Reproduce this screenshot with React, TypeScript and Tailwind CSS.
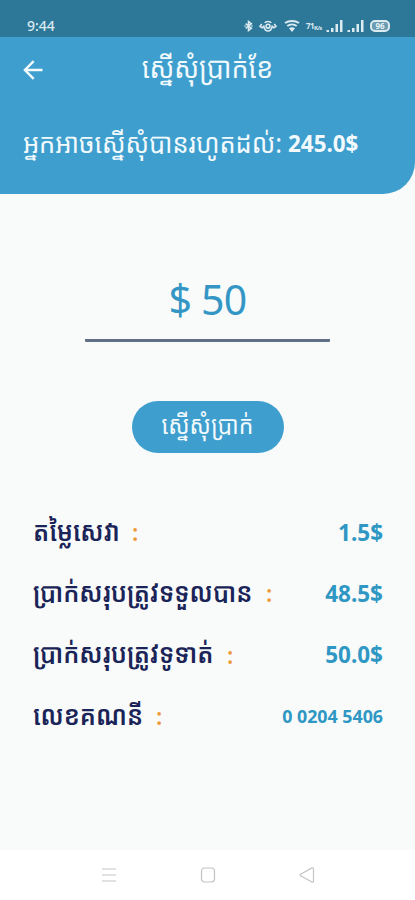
import React from 'react';

interface SummaryItem {
  id: string;
  label: string;
  value: string;
  labelClass: string;
  valueClass: string;
}

const SUMMARY: SummaryItem[] = [
  { id: 'fee', label: 'តម្លៃសេវា', value: '1.5$', labelClass: 'w-[86px]', valueClass: 'text-[22.5px]' },
  { id: 'receive', label: 'ប្រាក់សរុបត្រូវទទួលបាន', value: '48.5$', labelClass: 'w-[220px]', valueClass: 'text-[22.5px]' },
  { id: 'pay', label: 'ប្រាក់សរុបត្រូវទូទាត់', value: '50.0$', labelClass: 'w-[181px]', valueClass: 'text-[22.5px]' },
  { id: 'account', label: 'លេខគណនី', value: '0 0204 5406', labelClass: 'w-[110px]', valueClass: 'text-[17.8px]' },
];

function SignalIcon() {
  return (
    <svg width="17" height="14" viewBox="0 0 17 14" fill="currentColor" className="shrink-0">
      <rect x="0.500" y="11" width="2.500" height="2" />
      <rect x="5" y="9" width="2.500" height="4" />
      <rect x="9.500" y="5" width="2.500" height="8" />
      <rect x="14" y="1" width="2.500" height="12" />
    </svg>
  );
}

function StatusBar() {
  return (
    <div className="flex h-[37px] items-start justify-between bg-[#2d7799] pl-[27px] pr-[25px] pt-[15px] text-[#dcebf0]">
      <span className="text-[14px] font-medium leading-[21px]">9:44</span>
      <div className="flex items-center pt-[4px]">
        {/* bluetooth */}
        <svg width="9" height="12" viewBox="0 0 11 14" fill="none" stroke="currentColor" strokeWidth="1.900" className="mr-[6px]">
          <path d="M2 4.200l7 5.500-3.500 2.800v-11L9 4.300 2 9.800M.500 7h1.500M9 7h1.500" />
        </svg>
        {/* vibrate */}
        <svg width="18" height="14" viewBox="0 0 18 14" fill="none" stroke="currentColor" strokeWidth="1.600" className="mr-[7px]">
          <path d="M2.800 5L1 7.200l2 1.600 1.800-1.500C5.500 10.500 7 12 9 12s3.500-1.500 4.200-4.700L15 8.800l2-1.600L15.200 5M5.800 4C6.800 2 11.200 2 12.200 4" />
          <circle cx="9" cy="7.200" r="1.900" />
        </svg>
        {/* wifi */}
        <svg width="16" height="14" viewBox="0 0 16 14" fill="none" stroke="currentColor" strokeWidth="2" className="mr-[6px]">
          <path d="M1 4C5 1.200 11 1.200 15 4M3.300 7C6 5 10 5 12.700 7" />
          <path d="M5 9.300C6.500 8 9.500 8 11 9.300L8 13z" fill="currentColor" stroke="none" />
        </svg>
        {/* data rate */}
        <div className="mr-[4px] flex h-[14px] w-[16px] items-end justify-between pb-px font-bold tracking-[-0.6px]">
          <span className="w-[7px] text-[8px] leading-[12px]">71</span>
          <span className="w-[8px] text-[6px] leading-[8px]">K/s</span>
        </div>
        <SignalIcon />
        <span className="w-[4px]" />
        <SignalIcon />
        <div className="ml-[6px] flex h-[12px] w-[20px] shrink-0 items-center justify-center rounded-[5px] border-2 border-[#dcebf0] bg-[#6a9bb0] text-[8px] font-bold leading-none text-[#e6f1f5]">
          96
        </div>
      </div>
    </div>
  );
}

function Header() {
  return (
    <header className="h-[157px] rounded-br-[32px] bg-[#3e9ecd] text-[#f2fafd]">
      <div className="grid h-[64px] grid-cols-[56px_1fr_56px] items-center">
        <svg width="20" height="20" viewBox="0 0 20 20" fill="none" stroke="currentColor" strokeWidth="2.4" className="ml-[23px] mt-px">
          <path d="M19.500 10H2M10.700 1.200L1.900 10l8.800 8.800" />
        </svg>
        <h1 className="-mt-[4px] scale-y-110 whitespace-nowrap text-center text-[26.8px] leading-[40px]">ស្នើសុំប្រាក់ខែ</h1>
      </div>
      <p className="flex items-baseline whitespace-pre pl-[23px] pt-[22px] text-[22.4px] leading-[40px]">
        <span className="-mt-px inline-block scale-y-110 text-[25.4px]">អ្នកអាចស្នើសុំបានរហូតដល់:</span>
        <b className="ml-[6px] font-bold">245.0$</b>
      </p>
    </header>
  );
}

function NavBar() {
  return (
    <nav className="flex h-[50px] items-center justify-center gap-[83px] bg-white text-[#c4c4c4]">
      <svg width="16" height="16" viewBox="0 0 16 16" fill="none" stroke="currentColor" strokeWidth="1.2">
        <path d="M1 2h14M1 8h14M1 14h14" />
      </svg>
      <svg width="16" height="16" viewBox="0 0 16 16" fill="none" stroke="currentColor" strokeWidth="1.2">
        <rect x="1.500" y="1" width="13" height="14" rx="3" />
      </svg>
      <svg width="16" height="16" viewBox="0 0 16 16" fill="none" stroke="currentColor" strokeWidth="1.2" strokeLinejoin="round">
        <path d="M1.600 7.200L13 .900Q14.500 .500 14.500 2v12Q14.500 15.600 13 15L1.600 8.800Q.800 8 1.600 7.200z" />
      </svg>
    </nav>
  );
}

export default function App() {
  return (
    <div className="flex h-[900px] w-[415px] flex-col overflow-hidden bg-[#f8fbfa] font-['Noto_Sans','Noto_Sans_Khmer','Khmer_OS',sans-serif]">
      <StatusBar />
      <Header />

      <main className="flex flex-1 flex-col">
        {/* requested amount */}
        <div className="mx-auto mt-[75px] h-[73px] w-[245px] rounded-[1px] border-b-[3px] border-[#617087] text-center text-[41px] leading-[60px] tracking-[-0.8px] text-[#3496c5]">
          $ 50
        </div>
        <button className="mx-auto mt-[59px] h-[52px] w-[152px] whitespace-nowrap rounded-full bg-[#3e9ecd] pb-[6px] text-[23px] leading-[46px] text-[#f2fafd]">
          <span className="inline-block scale-y-110">ស្នើសុំប្រាក់</span>
        </button>

        <dl className="mt-[49px] pl-[33px] pr-[32px]">
          {SUMMARY.map(item => (
            <div key={item.id} className="flex h-[61.3px] items-center justify-between">
              <dt className="flex items-center whitespace-nowrap text-[24.4px] font-semibold leading-[40px] text-[#1b2458]">
                <span className={`-mt-[4px] inline-block scale-y-110 ${item.labelClass}`}>{item.label}</span>
                <span className="-mt-px ml-[13px] text-[23px] text-[#f0993b]">:</span>
              </dt>
              <dd className={`font-bold text-[#2f97c3] ${item.valueClass}`}>{item.value}</dd>
            </div>
          ))}
        </dl>
      </main>

      <NavBar />
    </div>
  );
}
